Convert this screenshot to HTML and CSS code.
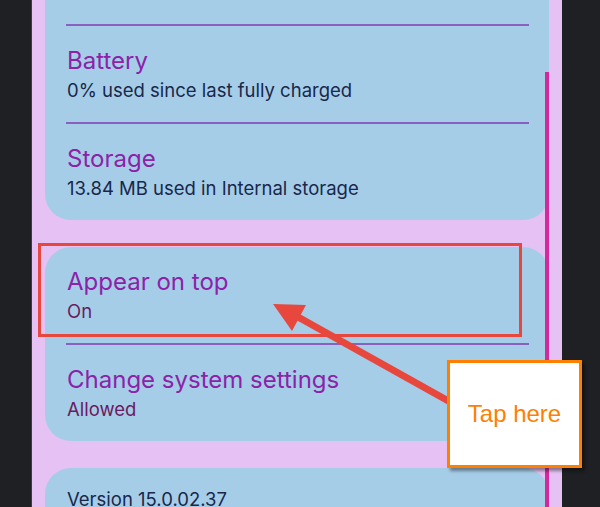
FILE: index.html
```html
<!DOCTYPE html>
<html lang="en">
<head>
    <meta charset="UTF-8">
    <meta name="viewport" content="width=device-width, initial-scale=1.0">
    <title>App info</title>
    <link rel="stylesheet" href="styles.css">
</head>
<body>

<div class="pantalla">
    <div class="tarjeta primera">
        <div class="fila con-linea">
            <p class="titulo">Battery</p>
            <p class="detalle">0% used since last fully charged</p>
        </div>
        <div class="fila con-linea">
            <p class="titulo">Storage</p>
            <p class="detalle">13.84 MB used in Internal storage</p>
        </div>
    </div>

    <div class="tarjeta">
        <div class="fila">
            <p class="titulo">Appear on top</p>
            <p class="detalle estado">On</p>
        </div>
        <div class="fila con-linea">
            <p class="titulo">Change system settings</p>
            <p class="detalle estado">Allowed</p>
        </div>
    </div>

    <div class="tarjeta">
        <div class="fila version">
            <p class="detalle">Version 15.0.02.37</p>
        </div>
    </div>

    <div class="barra"></div>
</div>

<!-- anotaciones encima de la captura -->
<div class="marco"></div>

<svg class="flecha" width="600" height="507" viewBox="0 0 600 507">
    <line x1="298" y1="317" x2="452" y2="403" stroke="#e8473d" stroke-width="7"/>
    <polygon points="273,304 306,305 292,331" fill="#e8473d"/>
</svg>

<div class="nota">Tap here</div>

</body>
</html>
```

FILE: styles.css
```css
body {
    margin: 0;
    background-color: #1f2023;
    height: 507px;
    overflow: hidden;
    font-family: Inter, "Noto Sans", sans-serif;
}

.pantalla {
    position: relative;
    margin-left: 31px;
    width: 504px;
    height: 507px;
    padding: 0 13px;
    background-color: #e6c1f4;
    border-left: 1px solid #3a3b3e;
    display: flex;
    flex-direction: column;
    gap: 27px;
    overflow: hidden;
}

.tarjeta {
    background-color: #a6cde8;
    border-radius: 26px;
    flex-shrink: 0;
}

.tarjeta.primera {
    margin-top: -30px;
    padding-top: 54px;
}

.fila {
    margin: 0 20px 0 21px;
    padding: 20px 0 18px 1px;
}

.con-linea {
    border-top: 2px solid #8b5fc0;
}

.titulo {
    margin: 0;
    font-size: 24px;
    line-height: 30px;
    color: #8b22a8;
}

.detalle {
    margin: 0;
    font-size: 18.5px;
    line-height: 28px;
    color: #18284a;
}

.estado {
    color: #6b1a60;
}

.version {
    padding-top: 17px;
}

.barra {
    position: absolute;
    left: 513px;
    top: 72px;
    width: 4px;
    height: 440px;
    background-color: #d5289c;
}

.marco {
    position: absolute;
    left: 38px;
    top: 243px;
    width: 478px;
    height: 88px;
    border: 3px solid #e8473d;
}

.flecha {
    position: absolute;
    left: 0;
    top: 0;
}

.nota {
    position: absolute;
    left: 447px;
    top: 360px;
    width: 129px;
    height: 102px;
    border: 3px solid #ff7f00;
    background-color: #fff;
    box-shadow: 3px 3px 3px rgba(0, 0, 0, 0.4);
    display: flex;
    align-items: center;
    justify-content: center;
    font-family: "Liberation Sans", Arial, sans-serif;
    font-size: 24px;
    color: #ff7f00;
}
```
